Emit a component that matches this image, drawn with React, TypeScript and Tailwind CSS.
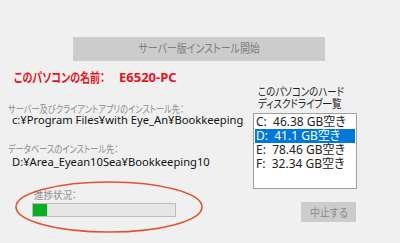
import React from "react";

const jp = "font-['Noto_Sans','Noto_Sans_CJK_JP',sans-serif] [font-feature-settings:'palt']";

function Narrow({ w, s, children, className = "" }: { w: number; s: string; children: React.ReactNode; className?: string }) {
  return (
    <span className={`inline-block whitespace-nowrap ${className}`} style={{ width: w }}>
      <span className={`inline-block origin-left ${s}`}>{children}</span>
    </span>
  );
}

export default function App() {
  const drives = [
    { t: "C:  46.38 GB空き", sel: false },
    { t: "D:  41.1 GB空き", sel: true },
    { t: "E:  78.46 GB空き", sel: false },
    { t: "F:  32.34 GB空き", sel: false },
  ];
  return (
    <div className={`relative w-[400px] h-[243px] overflow-hidden bg-[#f0f0f0] ${jp}`}>
      <div className="pt-[37px] pl-[73px]">
        <div className="w-[252px] h-[24px] bg-[#cccccc] flex items-center justify-center text-[12px] text-[#7c7c7c] leading-none">
          <span className="inline-block scale-x-[0.83] whitespace-nowrap">サーバー版インストール開始</span>
        </div>
      </div>
      <div className="flex">
        <div className="w-[253px] shrink-0">
          <div className="mt-[8px] pl-[14px] h-[16px] leading-[16px] text-[13px] font-bold text-[#e8141c] whitespace-nowrap flex">
            <Narrow w={105} s="scale-x-[0.77]">このパソコンの名前：</Narrow>
            <span>E6520-PC</span>
          </div>
          <div className="mt-[19px] pl-[8px] h-[10px] leading-[10px] text-[10px] text-[#8c8c8c] whitespace-nowrap">
            <span className="inline-block origin-left scale-x-[0.82]">サーバー及びクライアントアプリのインストール先：</span>
          </div>
          <div className="pl-[12px] h-[12px] leading-[12px] text-[11.2px] text-[#111] whitespace-nowrap">
            c:¥Program Files¥with Eye_An¥Bookkeeping
          </div>
          <div className="mt-[18px] pl-[8px] h-[10px] leading-[10px] text-[10px] text-[#8c8c8c] whitespace-nowrap">
            <span className="inline-block origin-left scale-x-[0.82]">データベースのインストール先：</span>
          </div>
          <div className="mt-[2px] pl-[12px] h-[12px] leading-[12px] text-[11.2px] text-[#111] whitespace-nowrap">
            D:¥Area_Eyean10Sea¥Bookkeeping10
          </div>
          <div className="mt-[22px] pl-[34px] h-[10px] leading-[10px] text-[10px] text-[#8c8c8c] whitespace-nowrap">
            <span className="inline-block origin-left scale-x-[0.95]">進捗状況：</span>
          </div>
          <div className="mt-[3px] ml-[32px] w-[144px] h-[14px] border border-[#bcbcbc] bg-[#e6e6e6] flex">
            <div className="w-[14px] h-full bg-[#06b025]" />
          </div>
        </div>
        <div className="w-[110px] shrink-0">
          <div className="mt-[25px] pl-[5px] text-[11.5px] leading-[12px] text-[#222] whitespace-nowrap">
            <div><span className="inline-block origin-left scale-x-[0.82]">このパソコンのハード</span></div>
            <div><span className="inline-block origin-left scale-x-[0.82]">ディスクドライブ一覧</span></div>
          </div>
          <div className="mt-[3px] w-[104px] h-[76px] border border-[#a0a0a0] bg-white pt-[1px] px-[1px]">
            {drives.map((d) => (
              <div
                key={d.t}
                className={`h-[14px] leading-[14px] pl-[1px] text-[12px] whitespace-pre ${d.sel ? "bg-[#0078d7] text-white" : "text-[#222]"}`}
              >
                {d.t}
              </div>
            ))}
          </div>
          <div className="mt-[13px] ml-[48px] w-[55px] h-[20px] bg-[#cccccc] flex items-center justify-center text-[11px] text-[#8a8a8a] leading-none">
            <span className="inline-block scale-x-[0.9] whitespace-nowrap">中止する</span>
          </div>
        </div>
      </div>
      <svg className="absolute left-0 top-0 pointer-events-none" width="400" height="243">
        <ellipse cx="109" cy="207" rx="93" ry="25" fill="none" stroke="#e2542e" strokeWidth="1.6" />
      </svg>
    </div>
  );
}
